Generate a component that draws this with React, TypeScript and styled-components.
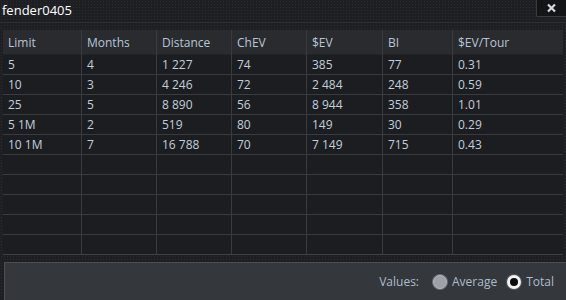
import React from "react";
import styled, { createGlobalStyle } from "styled-components";

const Global = createGlobalStyle`
  html, body { margin: 0; padding: 0; background: #1f2023; }
  body { font-family: "Open Sans", "Noto Sans", "Liberation Sans", sans-serif; }
`;

const Window = styled.div`
  width: 566px;
  height: 300px;
  overflow: hidden;
  display: flex;
  flex-direction: column;
  background-color: #1e1f22;
  background-image: radial-gradient(circle, #2b2c30 0.8px, transparent 0.9px);
  background-size: 3px 3px;
`;

const TitleBar = styled.div`
  height: 22px;
  display: flex;
  align-items: flex-start;
  justify-content: space-between;
  border-bottom: 1px solid #2e2f33;
`;

const Title = styled.div`
  color: #ffffff;
  font-size: 13px;
  line-height: 20px;
  padding-left: 2px;
`;

const CloseButton = styled.button`
  width: 30px;
  height: 17px;
  margin: 0;
  padding: 0;
  border: 0;
  border-left: 1px solid #3a3b3e;
  border-bottom: 1px solid #3a3b3e;
  border-bottom-left-radius: 2px;
  background: #141517;
  display: flex;
  align-items: center;
  justify-content: center;
`;

const Grid = styled.div`
  margin: 7px 3px 0 3px;
  display: flex;
  flex-direction: column;
  background: #1c1d20;
  border-bottom: 1px solid #3f4044;
`;

const Row = styled.div<{ $head?: boolean }>`
  display: grid;
  grid-template-columns: 79px 75px 75px 75px 76px 70px 1fr;
  height: ${(p) => (p.$head ? "25px" : "20px")};
  background: ${(p) => (p.$head ? "#2a2b2f" : "#1c1d20")};
  border-bottom: 1px solid ${(p) => (p.$head ? "#232427" : "#3a3b3e")};
  box-sizing: border-box;
`;

const Cell = styled.div<{ $head?: boolean }>`
  box-sizing: border-box;
  padding-left: 5px;
  border-right: 1px solid #3a3b3e;
  color: ${(p) => (p.$head ? "#b9c6d6" : "#c3cfdd")};
  font-size: 12px;
  line-height: ${(p) => (p.$head ? "26px" : "20px")};
  white-space: nowrap;
  &:last-child { border-right: 0; }
`;

const Body = styled.div`
  height: 199px;
  overflow: hidden;
`;

const Gap = styled.div`
  height: 7px;
`;

const Footer = styled.div`
  flex: 1;
  margin: 0 0 0 4px;
  background: #34373b;
  border: 1px solid #4b4e53;
  border-right: 0;
  border-bottom: 0;
  display: flex;
  align-items: center;
  justify-content: flex-end;
  padding-right: 12px;
  gap: 6px;
  color: #aebccb;
  font-size: 12px;
`;

const Label = styled.span`
  margin-right: 4px;
`;

const Option = styled.label`
  display: flex;
  align-items: center;
  gap: 5px;
  margin-left: 4px;
`;

const Radio = styled.span<{ $on?: boolean }>`
  width: 14px;
  height: 14px;
  border-radius: 50%;
  box-sizing: border-box;
  background: ${(p) => (p.$on ? "#0b0b0c" : "#9da1a8")};
  border: ${(p) => (p.$on ? "3px solid #f2f2f2" : "1px solid #b4b7bd")};
  box-shadow: 0 0 0 1px ${(p) => (p.$on ? "#55585d" : "#6a6d72")};
`;

const cols = ["Limit", "Months", "Distance", "ChEV", "$EV", "BI", "$EV/Tour"];
const data = [
  ["5", "4", "1 227", "74", "385", "77", "0.31"],
  ["10", "3", "4 246", "72", "2 484", "248", "0.59"],
  ["25", "5", "8 890", "56", "8 944", "358", "1.01"],
  ["5 1M", "2", "519", "80", "149", "30", "0.29"],
  ["10 1M", "7", "16 788", "70", "7 149", "715", "0.43"],
];
const empty = Array.from({ length: 5 }, () => cols.map(() => ""));

export default function App() {
  return (
    <>
      <Global />
      <Window>
        <TitleBar>
          <Title>fender0405</Title>
          <CloseButton aria-label="Close">
            <svg width="11" height="10" viewBox="0 0 11 10">
              <path d="M2 1.5 L9 8.5 M9 1.5 L2 8.5" stroke="#d6d8dc" strokeWidth="2.2" />
            </svg>
          </CloseButton>
        </TitleBar>
        <Grid>
          <Row $head>
            {cols.map((c) => (
              <Cell $head key={c}>{c}</Cell>
            ))}
          </Row>
          <Body>
            {[...data, ...empty].map((r, i) => (
              <Row key={i}>
                {r.map((v, j) => (
                  <Cell key={j}>{v}</Cell>
                ))}
              </Row>
            ))}
          </Body>
        </Grid>
        <Gap />
        <Footer>
          <Label>Values:</Label>
          <Option>
            <Radio />
            Average
          </Option>
          <Option>
            <Radio $on />
            Total
          </Option>
        </Footer>
      </Window>
    </>
  );
}
